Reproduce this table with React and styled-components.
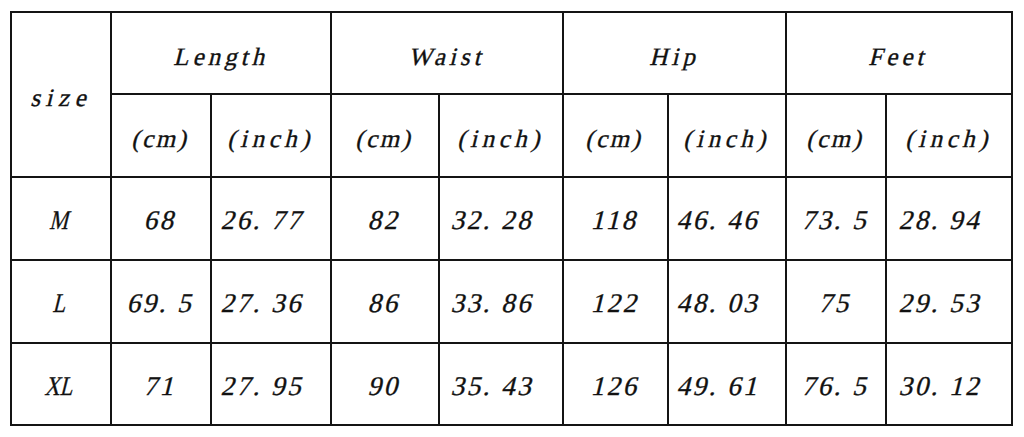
import React from "react";
import styled, { createGlobalStyle } from "styled-components";

const Global = createGlobalStyle`
  html, body { margin: 0; padding: 0; background: #ffffff; }
  body { font-family: "Liberation Serif", "Times New Roman", serif; color: #111; }
`;

const Page = styled.div`
  padding: 11px 0 0 10px;
`;

const Grid = styled.div`
  display: grid;
  grid-template-columns: 98px 98px 118px 106px 122px 103px 116px 98px 124px;
  grid-template-rows: 80px 81px 81px 81px 80px;
  gap: 2px;
  padding: 2px;
  background: #141414;
  width: max-content;
`;

const Cell = styled.div`
  background: #ffffff;
  display: flex;
  align-items: center;
  justify-content: center;
  grid-column: ${(p) => (p.$colSpan ? `span ${p.$colSpan}` : "auto")};
  grid-row: ${(p) => (p.$rowSpan ? `span ${p.$rowSpan}` : "auto")};
`;

const Label = styled.span`
  display: inline-block;
  font-family: "Liberation Serif", "Times New Roman", serif;
  font-size: ${(p) => (p.$head ? "25px" : "27px")};
  letter-spacing: ${(p) => p.$ls ?? (p.$head ? 4 : 2.5)}px;
  margin-right: ${(p) => -(p.$ls ?? (p.$head ? 4 : 2.5)) + (p.$trail ? 16 : 0)}px;
  transform: skewX(-14deg) ${(p) => (p.$narrow ? "scaleX(0.78)" : "")};
  -webkit-text-stroke: 0.35px #111;
  color: #111;
  line-height: 1;
  padding-top: ${(p) => (p.$head ? "6px" : "4px")};
`;

const groups = ["Length", "Waist", "Hip", "Feet"];
const rows = [
  ["M", "68", "26. 77", "82", "32. 28", "118", "46. 46", "73. 5", "28. 94"],
  ["L", "69. 5", "27. 36", "86", "33. 86", "122", "48. 03", "75", "29. 53"],
  ["XL", "71", "27. 95", "90", "35. 43", "126", "49. 61", "76. 5", "30. 12"],
];

export default function App() {
  return (
    <Page>
      <Global />
      <Grid>
        <Cell $rowSpan={2}>
          <Label $head $ls={5.5}>size</Label>
        </Cell>
        {groups.map((g) => (
          <Cell key={g} $colSpan={2}>
            <Label $head>{g}</Label>
          </Cell>
        ))}
        {groups.map((g) => (
          <React.Fragment key={g + "u"}>
            <Cell>
              <Label $head $ls={2.5}>(cm)</Label>
            </Cell>
            <Cell>
              <Label $head $ls={4.5}>(inch)</Label>
            </Cell>
          </React.Fragment>
        ))}
        {rows.map((r) =>
          r.map((v, i) => (
            <Cell key={r[0] + i}>
              <Label $trail={v.length >= 6} $narrow={i === 0} $ls={i === 0 ? 0 : undefined}>
                {v}
              </Label>
            </Cell>
          ))
        )}
      </Grid>
    </Page>
  );
}
